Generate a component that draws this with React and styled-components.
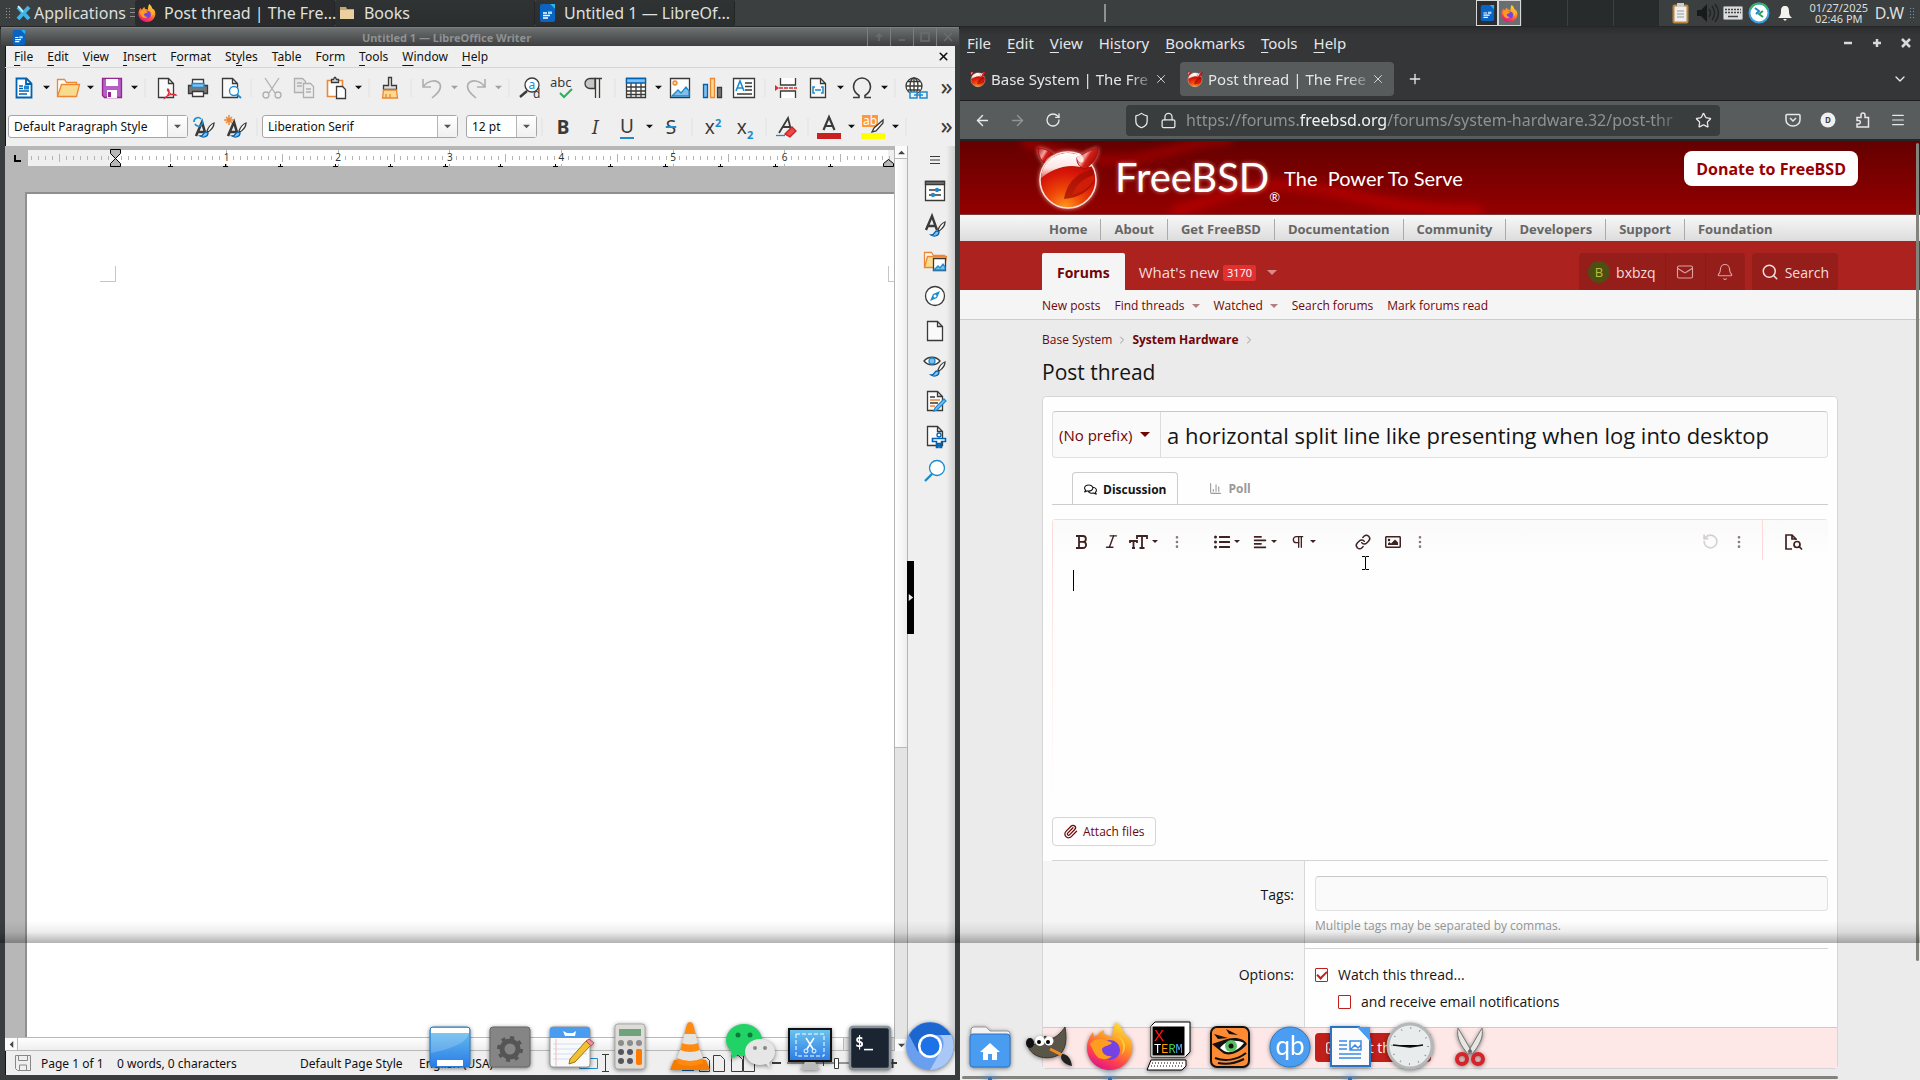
import React from "react";
import styled, { createGlobalStyle, css } from "styled-components";
import {
  ArrowLeft, ArrowRight, RotateCw, Shield, Lock, Star, Menu, ChevronDown, Plus, X, Bell, Search, Italic, Link2,
  Mail, Paperclip, Pilcrow, RotateCcw, ChevronRight, ChartColumn, EllipsisVertical, SquarePen, Link,
} from "lucide-react";
import { FaListUl, FaAlignLeft, FaRegImage, FaRegComments } from "react-icons/fa";

const Global = createGlobalStyle`
  * { box-sizing: border-box; }
  html, body { margin: 0; background: #111; }
  body { font-family: "Noto Sans", "Open Sans", sans-serif; overflow: hidden; }
  button, input, select, textarea { font: inherit; color: inherit; margin: 0; }
  button { border: 0; background: none; padding: 0; cursor: default; white-space: nowrap; }
  a { text-decoration: none; color: inherit; white-space: nowrap; }
  svg { display: block; flex: none; overflow: visible; }
  u { text-underline-offset: 3px; }
`;

const Screen = styled.div`
  position: relative;
  display: flex;
  flex-direction: column;
  height: 100vh;
  overflow: hidden;
  background: #1b1c1d;
`;
const Spacer = styled.div`flex: 1;`;

/* ---------- top panel ---------- */
const Panel = styled.header`
  display: flex;
  align-items: stretch;
  height: 27px;
  flex: none;
  background: #3b3f40;
  border-bottom: 1px solid #242627;
  color: #dcdedd;
  font-size: 16px;
  line-height: 26px;
`;
const Grip = styled.span`
  width: 6px;
  margin: 7px 5px 6px;
  background: radial-gradient(circle, ${(p) => p.$c || "#8b9a9e"} 1px, transparent 1px) 0 0 / 3px 3px;
`;
const AppMenu = styled.button`
  display: flex;
  align-items: center;
  gap: 3px;
  color: #dcdedd;
`;
const Lines = styled.span`
  width: 5px;
  margin: 8px 0 8px 4px;
  background: repeating-linear-gradient(#8a8d8d 0 1px, transparent 1px 4px);
`;
const Task = styled.button`
  position: relative;
  z-index: ${(p) => (p.$on ? 1 : 0)};
  display: flex;
  align-items: center;
  width: 200px;
  padding-left: 3px;
  gap: 8px;
  border-radius: 3px;
  border-right: 1px solid #222425;
  background: ${(p) => (p.$on ? "#292b2c" : "linear-gradient(#303334, #2b2e2f)")};
  color: #dfe0df;
`;
const Bar = styled.span`width: 2px; margin: 4px 0; background: #8f9190;`;
const Pager = styled.div`
  display: flex;
  background: #272b2c;
`;
const Workspace = styled.div`
  display: flex;
  width: 46px;
  border-right: 1px solid #3b3f40;
`;
const Mini = styled.span`
  display: grid;
  place-items: center;
  width: 23px;
  border: 1px solid #d8d8d8;
  background: ${(p) => (p.$on ? "#6b6e6e" : "#2b2d2e")};
`;
const Tray = styled.div`
  display: flex;
  align-items: center;
  padding-left: 8px;
  > svg { width: 26px; }
`;
const Clock = styled.time`
  width: 60px;
  margin: 0 6px 0 11px;
  font-size: 11px;
  line-height: 11px;
  text-align: center;
`;

const Desktop = styled.main`
  flex: 1;
  min-height: 0;
  display: grid;
  grid-template-columns: minmax(0, 1fr) minmax(0, 1fr);
`;

/* ---------- writer window ---------- */
const Writer = styled.section`
  display: flex;
  flex-direction: column;
  min-height: 0;
  border: solid #393d3e;
  border-width: 0 5px 5px;
  border-radius: 4px 4px 0 0;
  box-shadow: inset 1px 0 #111;
  background: #efefef;
  color: #111;
  font-size: 12px;
`;
const TitleBar = styled.div`
  display: flex;
  align-items: center;
  height: 19px;
  margin: 0 -4px;
  padding-left: 10px;
  border-top: 1px solid #7d8080;
  background: linear-gradient(#6d7071, #3c3e3f);
  color: #8f9191;
  h2 { flex: 1; margin: 0; font-size: 11px; font-weight: 700; text-align: center; }
`;
const TitleButton = styled.button`
  display: grid;
  place-items: center;
  width: 23px;
  height: 18px;
  border-left: 1px solid #7b7e7e;
`;
const WriterMenu = styled.nav`
  display: flex;
  align-items: center;
  gap: 14px;
  height: 22px;
  padding: 0 5px 0 9px;
  border-bottom: 1px solid #d5d5d5;
  u { text-underline-offset: 4px; }
`;
const Toolbar = styled.div`
  display: flex;
  align-items: center;
  height: 39px;
  padding-left: 3px;
`;
const Tool = styled.button`
  display: grid;
  place-items: center;
  flex: none;
  width: ${(p) => p.$w || 32}px;
  height: 30px;
  color: #3a3a38;
  opacity: ${(p) => (p.$off ? 0.35 : 1)};
`;
const Sep = styled.span`
  flex: none;
  width: 2px;
  height: 18px;
  margin: 0 4px;
  background: #e8e8e8;
`;
const Combo = styled.label`
  display: flex;
  flex: none;
  width: ${(p) => p.$w}px;
  height: 23px;
  margin-right: ${(p) => p.$gap || 0}px;
  border: 1px solid #a5a5a5;
  border-radius: 3px;
  background: #fff;
  select {
    flex: 1;
    min-width: 0;
    appearance: none;
    border: 0;
    padding: 0 5px;
    background: none;
    color: #111;
    outline: none;
  }
  span {
    display: grid;
    place-items: center;
    width: 20px;
    border-left: 1px solid #b5b5b5;
    background: linear-gradient(#fff, #f0f0f0);
  }
`;
const Glyph = styled.span`
  font-size: 19px;
  line-height: 22px;
  font-weight: ${(p) => (p.$b ? 700 : 400)};
  font-style: ${(p) => (p.$i ? "italic" : "normal")};
  border-bottom: ${(p) => (p.$line ? "2px solid #1e8bcd" : "0")};
  sup, sub { font-size: 11px; line-height: 0; color: #1e8bcd; font-weight: 700; }
  s { text-decoration-color: #1e8bcd; text-decoration-thickness: 2px; }
`;
const More = styled.span`
  font-size: 24px;
  line-height: 24px;
  padding-bottom: 4px;
`;
const Work = styled.div`
  flex: 1;
  min-height: 0;
  display: flex;
`;
const Canvas = styled.div`
  flex: 1;
  min-width: 0;
  display: flex;
  flex-direction: column;
  background: #b7b7b7;
`;
const Ruler = styled.div`
  height: 46px;
  overflow: hidden;
`;
const Sheet = styled.div`
  flex: 1;
  display: flex;
  justify-content: space-between;
  margin-left: 20px;
  padding: 72px 0 0 73px;
  border-top: 2px solid #8f8f8f;
  border-left: 2px solid #909090;
  background: #fff;
`;
const Corner = styled.span`
  width: ${(p) => p.$w}px;
  height: 16px;
  border: solid #c6c6c6;
  border-width: ${(p) => (p.$right ? "0 0 1px 1px" : "0 1px 1px 0")};
`;
const HScroll = styled.div`
  display: flex;
  height: 14px;
  border: solid #b9b9b9;
  border-width: 1px 0;
  background: #e2e2e2;
`;
const VScroll = styled.div`
  display: flex;
  flex-direction: column;
  width: 14px;
  border: solid #b4b4b4;
  border-width: 0 1px;
  background: #e4e4e4;
`;
const ArrowCell = styled.button`
  display: grid;
  place-items: center;
  width: 12px;
  height: 12px;
  background: #fbfbfb;
`;
const Thumb = styled.span`
  flex: ${(p) => p.$f};
  background: ${(p) => (p.$v ? "linear-gradient(90deg, #fff, #eee)" : "linear-gradient(#fff, #eee)")};
  border: 0 solid #b9b9b9;
  border-width: ${(p) => (p.$v ? "1px 0" : "0 1px")};
`;
const Trough = styled.span`flex: ${(p) => p.$f};`;
const Sidebar = styled.aside`
  position: relative;
  display: flex;
  flex-direction: column;
  align-items: center;
  width: 47px;
  padding: 0 0 0 7px;
  background: linear-gradient(90deg, #efefef 38px, #cfcfcf);
`;
const SideButton = styled.button`
  display: grid;
  place-items: center;
  width: 32px;
  height: ${(p) => p.$h || 35}px;
  color: #3a3a38;
`;
const Collapse = styled.button`
  position: absolute;
  left: -1px;
  top: 415px;
  display: grid;
  place-items: center;
  width: 7px;
  height: 73px;
  background: #000;
`;
const Status = styled.footer`
  display: flex;
  align-items: center;
  height: 24px;
  padding-left: 10px;
  white-space: nowrap;
`;
const StatusItem = styled.span`
  width: ${(p) => p.$w}px;
  flex: none;
`;

/* ---------- browser window ---------- */
const Browser = styled.section`
  display: flex;
  flex-direction: column;
  min-height: 0;
  background: #353638;
  color: #e6e6e6;
`;
const BrowserMenu = styled.nav`
  display: flex;
  align-items: center;
  gap: 16px;
  height: 31px;
  padding: 0 8px 0 7px;
  background: linear-gradient(#2b2c2e, #353638 8px);
  font-size: 15px;
`;
const WinButton = styled.button`
  display: grid;
  place-items: center;
  width: 13px;
  height: 20px;
  color: #d9d9d9;
`;
const Tabs = styled.div`
  display: flex;
  align-items: center;
  height: 43px;
  padding: 4px 8px 4px 3px;
  border-bottom: 1px solid #1d1e1f;
  gap: 3px;
`;
const Tab = styled.div`
  display: flex;
  align-items: center;
  width: 214px;
  height: 34px;
  padding: 0 9px 0 7px;
  border-radius: 4px;
  gap: 5px;
  background: ${(p) => (p.$on ? "#575b5c" : "transparent")};
  font-size: 15px;
  button:first-of-type {
    flex: 1;
    min-width: 0;
    text-align: left;
    mask-image: linear-gradient(90deg, #000 88%, rgba(0, 0, 0, 0.3));
  }
`;
const IconButton = styled.button`
  display: grid;
  place-items: center;
  width: ${(p) => p.$w || 35}px;
  height: 28px;
  color: #e8e8e8;
  opacity: ${(p) => (p.$off ? 0.4 : 1)};
`;
const NavBar = styled.div`
  display: flex;
  align-items: center;
  height: 40px;
  padding: 0 5px;
  border-bottom: 2px solid #242627;
  background: #585c5d;
`;
const UrlBar = styled.div`
  flex: 1;
  display: flex;
  align-items: center;
  min-width: 0;
  height: 31px;
  margin: 0 55px 0 56px;
  padding: 0 2px;
  border-radius: 4px;
  background: #3a3d3e;
`;
const Url = styled.a`
  flex: 1;
  min-width: 0;
  margin-left: 4px;
  color: #8f9292;
  font-size: 16px;
  mask-image: linear-gradient(90deg, #000 93%, rgba(0, 0, 0, 0.1));
  b { font-weight: 400; color: #f2f2f2; }
`;
const Viewport = styled.div`
  position: relative;
  flex: 1;
  min-height: 0;
  overflow: hidden;
  background: #ebebeb;
  color: #141414;
  font-family: "Open Sans", "Noto Sans", sans-serif;
`;
const VBar = styled.span`
  position: absolute;
  top: 2px;
  right: 1px;
  width: 3px;
  height: 818px;
  border-radius: 2px;
  background: #82837d;
`;
const HBar = styled.span`
  position: absolute;
  left: 2px;
  right: 82px;
  bottom: 1px;
  height: 3px;
  border-radius: 2px;
  background: #82837d;
`;
const Masthead = styled.div`
  position: relative;
  display: flex;
  height: 73px;
  overflow: hidden;
  background: linear-gradient(#640000, #940000);
  color: #fff;
  font-family: Lato, "Noto Sans", sans-serif;
`;
const Swirl = styled.svg`
  position: absolute;
  left: 62px;
  top: 0;
`;
const Brand = styled.a`
  position: relative;
  display: flex;
  margin-left: 76px;
  svg { margin-top: 4px; filter: drop-shadow(0 0 2px rgba(255, 190, 180, 0.8)); }
`;
const BrandName = styled.span`
  margin-left: 15px;
  font-size: 40px;
  line-height: 72px;
  text-shadow: 0 0 4px rgba(255, 170, 160, 0.7);
`;
const Registered = styled.span`
  align-self: flex-end;
  font-size: 13px;
  line-height: 34px;
`;
const Motto = styled.span`
  margin-left: 4px;
  font-size: 20px;
  line-height: 74px;
  white-space: pre;
`;
const Donate = styled.a`
  position: relative;
  height: 35px;
  margin: 10px 62px 0 auto;
  padding: 0 12px;
  border-radius: 8px;
  background: #fff;
  color: #900;
  font: 700 16px/36px "Open Sans", sans-serif;
`;
const SiteNav = styled.nav`
  display: flex;
  align-items: center;
  height: 27px;
  padding: 2px 0 0 76px;
  border-top: 1px solid #7d3b3b;
  background: linear-gradient(#f8f8f8, #dcdcdc);
  color: #666;
  font-size: 13px;
  font-weight: 700;
  a {
    padding: 0 13px;
    line-height: 21px;
    & + a { border-left: 1px solid #aaa; }
  }
`;
const Center = styled.div`
  display: flex;
  margin: 0 82px;
`;
const RedBar = styled.div`
  background: #ac221e;
  padding-top: 12px;
  color: #f6dcdb;
  font-size: 15px;
  line-height: 37px;
`;
const CurrentTab = styled.a`
  padding: 0 15px;
  height: 37px;
  border-radius: 2px 2px 0 0;
  background: #f5f5f5;
  color: #700506;
  font-size: 14px;
  font-weight: 700;
  line-height: 39px;
`;
const NewLink = styled.a`
  display: flex;
  align-items: center;
  padding-top: 2px;
  height: 37px;
  margin-left: 14px;
  gap: 4px;
`;
const Badge = styled.span`
  padding: 0 4px;
  border-radius: 2px;
  background: #e03030;
  color: #fff;
  font-size: 11px;
  line-height: 16px;
`;
const Caret = styled.span`
  width: 0;
  height: 0;
  margin-left: ${(p) => p.$ml || 0}px;
  border: ${(p) => p.$s || 5}px solid transparent;
  border-top-color: ${(p) => p.$c || "currentColor"};
  border-bottom: 0;
`;
const UserGroup = styled.div`
  display: flex;
  margin-left: ${(p) => (p.$first ? "auto" : "7px")};
  border-radius: 4px 4px 0 0;
  background: #951e1b;
  font-size: 14px;
  a, button {
    display: flex;
    align-items: center;
    justify-content: center;
    min-width: 40px;
    height: 37px;
    padding: 1px 9px 0;
    gap: 6px;
    & + a, & + button { border-left: 1px solid #8a1a17; }
  }
`;
const Avatar = styled.span`
  width: 22px;
  height: 22px;
  border-radius: 50%;
  background: #4d4d14;
  color: #b8c034;
  font-size: 13px;
  line-height: 22px;
  text-align: center;
`;
const SubNav = styled.nav`
  padding-top: 2px;
  border-bottom: 1px solid #ccc;
  background: #f5f5f5;
  color: #700506;
  font-size: 12px;
  line-height: 27px;
  a { display: flex; align-items: center; margin-right: 14px; }
`;
const Crumbs = styled.nav`
  display: flex;
  align-items: center;
  margin: 10px 82px 0;
  gap: 4px;
  color: #700506;
  font-size: 12px;
  line-height: 20px;
  svg { color: #999; }
`;
const Heading = styled.h1`
  margin: 8px 82px 10px;
  font-size: 21px;
  font-weight: 400;
  line-height: 28px;
`;
const Block = styled.form`
  margin: 0 82px;
  border: 1px solid #d6d6d6;
  border-radius: 4px;
  background: #fefefe;
`;
const BlockBody = styled.div`
  margin: 14px 9px 0;
  border-bottom: 1px solid #d4d4d4;
`;
const TitleGroup = styled.div`
  display: flex;
  height: 47px;
  border: 1px solid #e0e0e0;
  border-top-color: #c8c8c8;
  border-radius: 4px;
  background: #fafafa;
`;
const Prefix = styled.label`
  display: flex;
  align-items: center;
  width: 108px;
  padding-left: 6px;
  border-right: 1px solid #ddd;
  color: #700506;
  font-size: 15px;
  select { width: 80px; appearance: none; border: 0; padding: 0; background: none; outline: none; }
`;
const TitleInput = styled.input`
  flex: 1;
  min-width: 0;
  padding: 0 6px;
  border: 0;
  outline: none;
  background: none;
  font-size: 22px;
`;
const TypeTabs = styled.div`
  display: flex;
  height: 33px;
  margin-top: 14px;
  padding-left: 20px;
  border-bottom: 1px solid #ccc;
  font-size: 12px;
`;
const TypeTab = styled.button`
  display: flex;
  align-items: center;
  height: 32px;
  gap: 6px;
  padding: 1px ${(p) => (p.$on ? 11 : 31)}px 0;
  border: solid #ccc;
  border-width: ${(p) => (p.$on ? "1px 1px 0" : "0")};
  border-radius: 4px 4px 0 0;
  color: ${(p) => (p.$on ? "#141414" : "#999")};
  font-weight: 700;
`;
const Editor = styled.div`
  position: relative;
  margin-top: 14px;
  border-top: 1px solid #fddad8;
  border-radius: 4px;
  background: linear-gradient(#fddad8, #fefefe) 0 0 / 1px 100% no-repeat;
`;
const EditorBar = styled.div`
  display: flex;
  align-items: center;
  height: 40px;
  margin-left: 1px;
  padding-left: 13px;
  background: linear-gradient(#fafafa, #fefefe);
`;
const EditButton = styled.button`
  display: flex;
  align-items: center;
  justify-content: center;
  gap: 4px;
  width: ${(p) => p.$w}px;
  height: 40px;
  margin-left: ${(p) => p.$ml || 0}px;
  padding-top: 3px;
  color: #3f2222;
  opacity: ${(p) => (p.$off ? 0.2 : p.$dim ? 0.6 : 1)};
  ${(p) => p.$line && css`border-left: 1px solid #fddad8; margin-left: 5px; padding-right: 4px;`}
`;
const TextArea = styled.textarea`
  display: block;
  width: calc(100% - 1px);
  height: 242px;
  margin-left: 1px;
  padding: 12px 20px;
  border: 0;
  outline: none;
  resize: none;
  background: none;
`;
const TextCaret = styled.span`
  position: absolute;
  left: 21px;
  top: 50px;
  width: 1px;
  height: 21px;
  background: #000;
`;
const Attach = styled.button`
  display: flex;
  align-items: center;
  height: 29px;
  margin: 15px 0 14px;
  padding: 0 10px;
  gap: 5px;
  border: 1px solid #d6d6d6;
  border-radius: 4px;
  color: #700506;
  font-size: 12px;
`;
const FormRow = styled.div`
  display: grid;
  grid-template-columns: 33% minmax(0, 1fr);
  font-size: 14px;
  line-height: 20px;
`;
const RowLabel = styled.label`
  padding: ${(p) => p.$top || 24}px 10px 0 0;
  border-right: 1px solid #d8d8d8;
  background: #f5f5f5;
  text-align: right;
`;
const RowField = styled.div`
  margin-right: 9px;
  padding: ${(p) => p.$p};
  border-bottom: ${(p) => (p.$line ? "1px solid #d4d4d4" : "0")};
`;
const TagInput = styled.input`
  display: block;
  width: 100%;
  height: 35px;
  border: 1px solid #e0e0e0;
  border-top-color: #c8c8c8;
  border-radius: 4px;
  background: #fafafa;
`;
const Hint = styled.p`
  margin: 5px 0 12px;
  color: #999;
  font-size: 12px;
  line-height: 20px;
`;
const Check = styled.label`
  display: flex;
  align-items: center;
  height: 27px;
  margin-left: ${(p) => (p.$in ? 23 : 0)}px;
  gap: 10px;
  font-size: 14px;
  input {
    display: grid;
    place-items: center;
    appearance: none;
    width: 13px;
    height: 14px;
    margin: 0;
    border: 1px solid #c0201c;
    border-radius: 1px;
  }
  input:checked::after {
    content: "";
    width: 4px;
    height: 8px;
    border: solid #c0201c;
    border-width: 0 2px 2px 0;
    transform: translateY(-1px) rotate(45deg);
  }
`;
const SubmitRow = styled.div`
  padding: 5px 0 6px 33%;
  border-top: 1px solid #ccc;
  background: #fee8e7;
`;
const Submit = styled.button`
  display: flex;
  align-items: center;
  justify-content: center;
  gap: 6px;
  width: 116px;
  height: 29px;
  margin-left: 10px;
  border-radius: 4px;
  background: #c01f1a;
  color: #fff;
  font-size: 14px;
`;

/* ---------- dock and overlays ---------- */
const Shade = styled.div`
  position: absolute;
  left: 0;
  right: 0;
  bottom: 137px;
  height: 22px;
  background: linear-gradient(transparent, rgba(0, 0, 0, 0.07) 50%, rgba(0, 0, 0, 0.3));
  pointer-events: none;
`;
const Dock = styled.nav`
  position: absolute;
  left: 0;
  right: 0;
  bottom: 0;
  display: flex;
  justify-content: center;
`;
const DockItem = styled.button`
  position: relative;
  display: grid;
  justify-items: center;
  width: 60px;
  height: 58px;
  svg { filter: drop-shadow(0 1px 2px rgba(0, 0, 0, 0.5)); }
`;
const RunDot = styled.span`
  position: absolute;
  bottom: 0;
  width: 4px;
  height: 3px;
  border-radius: 2px 2px 0 0;
  background: #2c70b8;
  box-shadow: 0 0 6px 4px rgba(70, 140, 220, 0.4);
`;
const Pointer = styled.svg`
  position: absolute;
  left: 1361px;
  top: 556px;
`;

/* ---------- drawings ---------- */
const Tri = ({ c = "#111", w = 7, d = "down" }) => (
  <svg width={w} height={w} viewBox="0 0 8 8">
    <path fill={c} d={d === "down" ? "M0 2h8L4 6z" : d === "up" ? "M0 6h8L4 2z" : d === "left" ? "M6 0v8L2 4z" : "M2 0v8l5-4z"} />
  </svg>
);
const Dots3 = () => <EllipsisVertical size={16} strokeWidth={2} />;

const Fox = ({ s = 18 }) => (
  <svg width={s} height={s} viewBox="0 0 48 48">
    <defs>
      <linearGradient id="fxa" x1=".8" y1="0" x2=".3" y2="1">
        <stop offset="0" stopColor="#ffe63c" /><stop offset=".4" stopColor="#ff9a24" />
        <stop offset=".75" stopColor="#ff3f50" /><stop offset="1" stopColor="#e0128a" />
      </linearGradient>
    </defs>
    <path fill="url(#fxa)" d="M30 0c5 4 7 8 8 12 3 1 6 4 7 7 2 5 2 12-2 18-4 7-11 11-19 11C11 48 1 38 1 26c0-7 3-12 6-16l1 5c1-1 3-2 4-2 1-2 3-4 6-5-1 2 0 4 1 5 3 0 5 1 7 3 1-6 1-11 4-16z" />
    <circle cx="24" cy="28" r="10" fill="#7542e5" />
    <path fill="#ff9d1e" d="M4 22c4-5 9-6 14-4 3 1 6 1 8 3-3 3-9 3-10 6 0 5 5 8 10 7-5 5-14 4-17-2-2-3-3-7-5-10z" />
    <path fill="#ffcb36" d="M32 14c5 5 7 12 3 19 6-5 6-14-3-19z" />
  </svg>
);
const Daemon = ({ s = 16 }) => (
  <svg width={s} height={s} viewBox="0 0 64 64">
    <defs>
      <radialGradient id="dma" cx=".45" cy="1" r=".9">
        <stop offset="0" stopColor="#ff9a1c" /><stop offset=".35" stopColor="#ef4a08" />
        <stop offset=".7" stopColor="#d81608" /><stop offset="1" stopColor="#b00c04" />
      </radialGradient>
      <linearGradient id="dmc" x1="0" y1="0" x2="0" y2="1">
        <stop offset="0" stopColor="#fff" /><stop offset=".6" stopColor="#fbe6e3" /><stop offset="1" stopColor="#e2655a" />
      </linearGradient>
      <linearGradient id="dmb" x1="0" y1="0" x2="1" y2=".6">
        <stop offset="0" stopColor="#a80c0c" /><stop offset=".45" stopColor="#f6a39c" /><stop offset=".6" stopColor="#d42018" /><stop offset="1" stopColor="#9a0806" />
      </linearGradient>
    </defs>
    <circle cx="32" cy="35" r="28" fill="url(#dma)" stroke="#ffe1da" strokeWidth="1.500" />
    <path fill="#a20c04" d="M57 24c-15 4-26 12-29 30 14-1 26-8 30-18 0-4 0-8-1-12z" opacity=".75" />
    <path fill="#d62208" d="M58 30c-10 3-18 9-22 20 10-2 18-8 22-15z" opacity=".8" />
    <path fill="url(#dmc)" d="M5 33C6 18 18 8 32 8c11 0 20 5 24 13-8 3-12 0-20 0-13 0-23 6-31 12z" />
    <path fill="url(#dmb)" stroke="#a00" strokeWidth=".8" d="M2 3c7 1 12 3 15 6-4 2-8 5-9 9C5 15 2 10 2 3z" />
    <path fill="url(#dmb)" stroke="#a00" strokeWidth=".8" d="M62 3c0 8-4 15-13 21-5-1-9-6-8-12C48 9 55 4 62 3z" />
    <ellipse cx="44" cy="13" rx="3" ry="5" fill="#fff" opacity=".8" transform="rotate(-30 44 13)" />
  </svg>
);
const WriterLogo = ({ s = 18 }) => (
  <svg width={s} height={s} viewBox="0 0 18 18">
    <path fill="#0a64c4" d="M4 0h8l5 5v11a2 2 0 0 1-2 2H4a2 2 0 0 1-2-2V2a2 2 0 0 1 2-2z" />
    <path fill="#25b4f0" d="M12 0h5v5z" />
    <path stroke="#fff" strokeWidth="1.4" d="M5 9h4M5 11.500h7M5 14h5" /><path fill="#9fe0ff" d="M10 7.500h4v2.500h-4z" />
  </svg>
);
const XfceLogo = () => (
  <svg width="15" height="16" viewBox="0 0 15 16">
    <path fill="none" stroke="#3fb4e8" strokeWidth="4" d="M2 2l11 12M13 2L2 14" /><path stroke="#d5f2ff" strokeWidth="1.500" d="M2 1l5 6" />
  </svg>
);
const Folder = () => (
  <svg width="18" height="16" viewBox="0 0 18 16"><path fill="#c9a473" d="M2 2h6l1 2h7v10H2z" /><path fill="#eccf9f" d="M2 5h14v9H2z" /></svg>
);

const K = "#3a3a38", B = "#1e8bcd", O = "#ed8733";
const Ic = ({ children, s = 24 }) => (
  <svg width={s} height={s} viewBox="0 0 24 24" fill="none" stroke={K} strokeWidth="1.3">{children}</svg>
);
const doc = "M4.500 2.500h10l5 5v14h-15zM14.500 2.500v5h5";
const Brush = () => (
  <>
    <path fill="#fff" d="M22 8c-3 1-6 5-7 8l1 1c3-2 6-5 6-9z" />
    <path stroke="#0063b1" fill="#83beec" d="M14 17c-3 0-2 4-6 4 3 2 8 1 8-3z" />
  </>
);
const ICONS = {
  newdoc: <Ic><path stroke="#0063b1" fill="#fff" strokeWidth="1.800" d="M4.500 2.500h10l5 5v14h-15zM14 3v5h5" /><path stroke="#0063b1" d="M7 10h4M7 12.500h4M7 15h10M7 18h8" /><path fill="#1e8bcd" stroke="none" d="M12 9.500h5v4h-5z" /></Ic>,
  open: <Ic><path stroke={O} fill="#fff" d="M1.500 20V3.500h7l2 3h10V10" /><path stroke={O} fill="#f8db8f" d="M1.500 20.500l4-12h18l-3 12z" /></Ic>,
  save: <Ic><path stroke="#92268f" fill="#b65fc4" d="M2.500 2.500h19v19h-17l-2-2z" /><path fill="#fff" stroke="none" d="M6 3h12v7H6zM7 14h10v8H7z" /><path fill="#92268f" stroke="none" d="M8 16h3v5H8z" /></Ic>,
  pdf: <Ic><path fill="#fafafa" d={doc} /><path stroke="#e02b3b" d="M11 22c4-2 5-8 3-9-2 0 2 7 8 6-3-2-9 0-11 3z" /></Ic>,
  print: <Ic><path fill="#fff" d="M6.500 3.500h11v5h-11z" /><path fill="#797774" d="M2.500 9.500h19v8h-19z" /><path fill="#83beec" stroke={B} d="M6 7.500h12v4H6z" /><path fill="#fff" d="M6.500 15.500h11v5h-11z" /></Ic>,
  preview: <Ic><path fill="#fafafa" d={doc} /><circle cx="16" cy="15" r="4.500" stroke={B} fill="#fff" /><path stroke={B} strokeWidth="2" d="M19 18.500l4 3.500" /></Ic>,
  cut: <Ic><path d="M5 2l10 15M19 2L9 17" /><circle cx="6" cy="19" r="3" /><circle cx="18" cy="19" r="3" /></Ic>,
  copy: <Ic><path fill="#ddd" d="M2.500 2.500h8l3 3v11h-11zM5 7h5M5 10h5" /><path fill="#eee" d="M11.500 7.500h7l3 3v11h-10zM14 13h5M14 16h5" /></Ic>,
  paste: <Ic><path stroke={O} fill="#fff" strokeWidth="1.600" d="M3.500 4.500h15v16h-15z" /><path fill="#ddd" d="M7.500 6.500v-3h2l1-2h1l1 2h2v3z" /><path fill="#fff" d="M12.500 10.500h6l3 3v9h-9z" /></Ic>,
  clone: <Ic><path fill="#ddd" d="M10.500 1.500h3v8h5v4h-13v-4h5z" /><path stroke={O} fill="#f8db8f" d="M5.500 14h13l1 8h-15zM8 18v4M12 18v4" /></Ic>,
  undo: <Ic><path strokeWidth="1.600" d="M3 3v8h8M3 11c5-7 14-8 17-3 2 5-2 9-8 14" /></Ic>,
  redo: <Ic><path strokeWidth="1.600" d="M21 3v8h-8M21 11c-5-7-14-8-17-3-2 5 2 9 8 14" /></Ic>,
  find: <Ic><circle cx="14" cy="9" r="7" fill="#fff" /><path strokeWidth="2.400" d="M9 15l-7 6" /><text x="10.500" y="13" fontSize="12" fill={B} stroke="none">a</text><text x="15" y="22" fontSize="12" fill={K} stroke="none">d</text></Ic>,
  spell: <Ic><text x="0" y="11" fontSize="13" fill={K} stroke="none">abc</text><path stroke="#28b05c" strokeWidth="2" d="M10 17l4 4 8-8" /></Ic>,
  pilcrow: <Ic><path fill="#c8c6c4" d="M13 2.500H8a5 5 0 0 0 0 10h5z" /><path d="M13.500 22V2.500H20M17.500 22V2.500" /></Ic>,
  table: <Ic><path fill="#fff" d="M2.500 2.500h19v19h-19zM2 11h20M2 15h20M2 18.500h20M7 7v14M12 7v14M17 7v14" /><path fill="#83beec" stroke="#0063b1" d="M2.500 2.500h19V7h-19z" /></Ic>,
  image: <Ic><path fill="#fff" d="M2.500 2.500h19v19h-19z" /><circle cx="7" cy="7" r="2" stroke={O} fill="#f8db8f" /><path fill="#83beec" stroke={B} d="M4 20l6-6 3 3 5-6 3 4v5z" /></Ic>,
  chart: <Ic><path fill="#83beec" stroke="#0063b1" d="M3.500 8.500h4v13h-4z" /><path fill="#f8db8f" stroke={O} d="M10.500 2.500h4v19h-4z" /><path fill="#797774" d="M17.500 11.500h4v10h-4z" /></Ic>,
  textbox: <Ic><path fill="#fff" d="M1.500 2.500h21v19h-21zM13 7h7M13 10.500h7M13 14h7M5 18h15" /><path stroke={B} strokeWidth="1.600" d="M4 15L8 5l4 10M5 12h6" /></Ic>,
  pagebreak: <Ic><path fill="#fff" d="M6.500 2v7h15V2M6.500 22v-7h15v7" /><path stroke="#e02b2b" strokeWidth="1.600" strokeDasharray="4 1" d="M5 12h18" /><path fill="#e02b2b" stroke="none" d="M1 9l4 3-4 3z" /></Ic>,
  field: <Ic><path fill="#fafafa" d={doc} /><path stroke={B} strokeWidth="1.500" d="M9 11H7v6h2M15 11h2v6h-2M9 14h6" /></Ic>,
  omega: <Ic><path strokeWidth="1.600" d="M3 21.500h6v-2C5 17 3.500 14 3.500 10.500a8.500 8.500 0 0 1 17 0C20.500 14 19 17 15 19.500v2h6" /></Ic>,
  link: <Ic><circle cx="10" cy="10" r="8" fill="#fff" /><path d="M2 10h16M10 2v16M4 5.500h12M4 14h12" /><ellipse cx="10" cy="10" rx="4" ry="8" /><path fill="#efefef" stroke={B} strokeWidth="1.500" d="M6 16h7v6H6zM16 16h7v6h-7zM10 19h9" /></Ic>,
  update: <Ic><path strokeWidth="2.600" d="M4 21l6-14 4 14M6 17h6" /><Brush /><path stroke={B} strokeWidth="1.600" d="M2 7a4 4 0 0 1 7-3M10 5a4 4 0 0 1-7 4" /></Ic>,
  newstyle: <Ic><path strokeWidth="2.600" d="M4 21l6-14 4 14M6 17h6" /><Brush /><path stroke={O} strokeWidth="1.500" d="M5 0v10M0 5h10M2 2l6 6M8 2L2 8" /></Ic>,
  clear: <Ic><path strokeWidth="1.800" d="M4 18L13 3l3 12M8 12h7" /><path stroke={B} d="M1 20.500h9" /><path fill="#e8474c" stroke="#c9211e" d="M10 19l7-7 4 4-6 6z" /></Ic>,
  color: <Ic><path strokeWidth="2.200" d="M6.500 15L12 2l5.500 13M8 11h8" /><path fill="#c9211e" stroke="none" d="M0 18h24v6H0z" /></Ic>,
  hilite: <Ic><path fill="#ff9838" stroke="none" d="M1 0h16v12H1z" /><path fill="#ff0" stroke="none" d="M0 18h24v6H0z" /><text x="2" y="10" fontSize="12" fill="#fff" stroke="none">ab</text><path fill="#fff" d="M22 5L13 13l-2 4 4-1 7-8z" /></Ic>,
  props: <Ic><path fill="#fff" d="M2.500 2.500h19v19h-19z" /><path fill="#797774" d="M2.500 2.500h19v3h-19z" /><path d="M6 11h12M6 16h12" /><circle cx="14" cy="11" r="1.500" fill={B} stroke={B} /><circle cx="10" cy="16" r="1.500" fill={B} stroke={B} /></Ic>,
  styles: <Ic><path strokeWidth="2.400" d="M3 16L9 2l5 14M5 12h8" /><Brush /></Ic>,
  gallery: <Ic><path stroke={O} fill="#fff" d="M1.500 18V3.500h7l2 3h11V10" /><path stroke={O} fill="#f8db8f" d="M1.500 18.500l3-11h19l-2 11z" /><path fill="#fff" d="M10.500 9.500h12v12h-12z" /><path fill="#83beec" stroke={B} d="M11 21l4-4 2 2 3-4 2 3v3z" /></Ic>,
  navigator: <Ic><circle cx="12" cy="12" r="9.500" fill="#fff" /><path fill={B} stroke="none" d="M17 7l-3 7-7 3 3-7z" /><circle cx="12" cy="12" r="1.500" fill="#fff" stroke="none" /></Ic>,
  page: <Ic><path fill="#fafafa" d={doc} /></Ic>,
  inspector: <Ic><path fill="#fff" d="M1 7c4-5 12-5 16 0-4 5-12 5-16 0z" /><circle cx="9" cy="7" r="3" fill="#83beec" stroke={B} /><Brush /></Ic>,
  changes: <Ic><path fill="#fafafa" d={doc} /><path stroke={O} d="M7 11h10M7 17h5" /><path d="M7 8h5M7 14h8" /><path fill="#83beec" stroke={B} d="M21 10l2 2-9 9-3 1 1-3z" /></Ic>,
  access: <Ic><path fill="#fafafa" d={doc} /><circle cx="16" cy="11" r="2" fill="#fff" stroke="#0063b1" /><path fill="#fff" stroke="#0063b1" strokeWidth="1.600" d="M9.500 14.500h13v3h-4v6h-1.500v-4h-2v4h-1.500v-6h-4z" /></Ic>,
  search: <Ic><circle cx="14" cy="9" r="7.500" fill="#fff" stroke={B} /><path stroke={B} strokeWidth="2.400" d="M9 15l-7 7" /></Ic>,
};

const WRITER_MENU = [["", "F", "ile"], ["", "E", "dit"], ["", "V", "iew"], ["", "I", "nsert"], ["F", "o", "rmat"], ["St", "y", "les"], ["T", "a", "ble"], ["Fo", "r", "m"], ["", "T", "ools"], ["", "W", "indow"], ["", "H", "elp"]];
const FOX_MENU = [["", "F", "ile"], ["", "E", "dit"], ["", "V", "iew"], ["Hi", "s", "tory"], ["", "B", "ookmarks"], ["", "T", "ools"], ["", "H", "elp"]];
const STANDARD = ["newdoc>", "open>", "save>", "|", "pdf", "print", "preview", "|", "-cut", "-copy", "paste>", "|", "clone", "|", "-undo>", "-redo>", "|", "find", "spell", "pilcrow", "|", "table>", "image", "chart", "textbox", "|", "pagebreak", "field>", "omega>", "|", "link"];
const SIDE = ["props", "styles", "gallery", "navigator", "page", "inspector", "changes", "access", "search"];

const Mnemonic = ({ parts }) => <button>{parts[0]}<u>{parts[1]}</u>{parts[2]}</button>;
const ArrowTool = ({ off }) => <Tool $w={12} $off={off} aria-label="More"><Tri /></Tool>;

function RulerDrawing() {
  const zero = 110, inch = 111.6;
  const ticks = [];
  for (let i = -12; i < 112; i++) {
    const x = zero + (i * inch) / 16;
    if (i === 0 || x > 888) continue;
    const whole = i % 16 === 0, half = i % 8 === 0;
    ticks.push(<path key={i} stroke="#b4b4b4" d={whole ? `M${x} 4v3M${x} 18v2` : half ? `M${x} 8v8` : `M${x} 10v4`} />);
  }
  return (
    <svg width="890" height="46" viewBox="0 0 890 46">
      <path fill="#efefef" d="M23 4h867v16H23z" /><path fill="#fff" d="M110 4h773v16H110z" />
      <path stroke="#000" strokeWidth="2" fill="none" d="M10 9v6h6" />
      <g shapeRendering="crispEdges">{ticks}</g>
      {[1, 2, 3, 4, 5, 6].map((n) => <text key={n} x={zero + n * inch} y="15" fontSize="10" textAnchor="middle" fill="#333">{n}</text>)}
      {Array.from({ length: 13 }, (_, i) => <path key={i} stroke="#000" d={`M${163 + i * 55} 20.500h5M${165.5 + i * 55} 18v3`} />)}
      <path fill="#b7b7b7" stroke="#000" d="M105.500 3.500h10v4l-10 10v3h10v-3l-10-10z" />
      <path fill="#b7b7b7" stroke="#000" d="M878.500 20.500v-3l5-4 5 4v3z" />
    </svg>
  );
}

function WriterWindow() {
  return (
    <Writer aria-label="Writer">
      <TitleBar>
        <WriterLogo s={15} />
        <h2>Untitled 1 — LibreOffice Writer</h2>
        {["M5 9V2M2 5l3-3 3 3", "M2 8h6", "M1 1h8v8H1z", "M1 1l8 8M9 1L1 9"].map((d) => (
          <TitleButton key={d} aria-label="Window control"><svg width="10" height="10" fill="none" stroke="#6a6d6e" strokeWidth="1.500"><path d={d} /></svg></TitleButton>
        ))}
      </TitleBar>
      <WriterMenu>
        {WRITER_MENU.map((m) => <Mnemonic key={m.join("")} parts={m} />)}
        <Spacer />
        <button aria-label="Close document"><X size={13} strokeWidth={3} /></button>
      </WriterMenu>
      <Toolbar>
        {STANDARD.map((t, i) => {
          if (t === "|") return <Sep key={i} />;
          const name = t.replace(/[->]/g, ""), off = t[0] === "-";
          return (
            <React.Fragment key={i}>
              <Tool $off={off} aria-label={name}>{ICONS[name]}</Tool>
              {t.endsWith(">") && <ArrowTool off={off} />}
            </React.Fragment>
          );
        })}
        <Spacer /><Tool $w={17}><More>»</More></Tool>
      </Toolbar>
      <Toolbar>
        <Combo $w={180}><select aria-label="Paragraph style"><option>Default Paragraph Style</option></select><span><Tri c="#555" /></span></Combo>
        <Tool>{ICONS.update}</Tool><Tool>{ICONS.newstyle}</Tool><Sep />
        <Combo $w={196} $gap={8}><select aria-label="Font name"><option>Liberation Serif</option></select><span><Tri c="#555" /></span></Combo>
        <Combo $w={71}><select aria-label="Font size"><option>12 pt</option></select><span><Tri c="#555" /></span></Combo>
        <Sep />
        <Tool><Glyph $b>B</Glyph></Tool>
        <Tool><Glyph $i>I</Glyph></Tool>
        <Tool><Glyph $line>U</Glyph></Tool><ArrowTool />
        <Tool><Glyph><s>S</s></Glyph></Tool><Sep />
        <Tool><Glyph>x<sup>2</sup></Glyph></Tool>
        <Tool><Glyph>x<sub>2</sub></Glyph></Tool><Sep />
        <Tool>{ICONS.clear}</Tool><Sep />
        <Tool>{ICONS.color}</Tool><ArrowTool />
        <Tool>{ICONS.hilite}</Tool><ArrowTool /><Sep />
        <Spacer /><Tool $w={17}><More>»</More></Tool>
      </Toolbar>
      <Work>
        <Canvas>
          <Ruler><RulerDrawing /></Ruler>
          <Sheet><Corner $w={16} /><Corner $right $w={6} /></Sheet>
          <HScroll>
            <ArrowCell aria-label="Scroll left"><Tri d="left" c="#444" /></ArrowCell><Thumb $f={820} /><Trough $f={50} />
          </HScroll>
        </Canvas>
        <VScroll>
          <ArrowCell aria-label="Scroll up"><Tri d="up" c="#444" /></ArrowCell><Thumb $v $f={579} /><Trough $f={287} />
          <ArrowCell aria-label="Scroll down"><Tri c="#444" /></ArrowCell>
        </VScroll>
        <Sidebar>
          <SideButton $h={27} aria-label="Sidebar settings"><svg width="10" height="8" stroke={K}><path d="M0 .5h10M0 4h10M0 7.500h10" /></svg></SideButton>
          {SIDE.map((n) => <SideButton key={n} aria-label={n}>{ICONS[n]}</SideButton>)}
          <Collapse aria-label="Hide sidebar"><Tri d="right" c="#eee" /></Collapse>
        </Sidebar>
      </Work>
      <Status>
        <StatusItem $w={26}><svg width="16" height="16" fill="none" stroke="#888"><path d="M.5 .5h15v15h-13l-2-2zM3.500 .5v5h9v-5M4.500 15v-5h7v5" /></svg></StatusItem>
        <StatusItem $w={76}>Page 1 of 1</StatusItem>
        <StatusItem $w={183}>0 words, 0 characters</StatusItem>
        <StatusItem $w={119}>Default Page Style</StatusItem>
        <StatusItem $w={156}>English (USA)</StatusItem>
        <svg width="320" height="24" fill="none" stroke="#3a3a38">
          <path stroke="#1e8bcd" d="M4.500 7.500h18v10h-18z" /><path d="M30.500 4v16M27 3.500h7M27 20.500h7" />
          <path fill="#0063b1" stroke="none" d="M107 14h12v6h-12z" />
          <path d="M124.500 6.500h7l3 3v11h-10zM138.500 4.500h7l4 4v12h-11zM156.500 4.500h7l4 4v12h-11zM168.500 4.500h7l4 4v12h-11z" />
          <path strokeWidth="2" d="M197 12h9M313 12h9M317.500 8v9" /><path d="M212 12h98M248.500 9v6" /><path fill="#fff" d="M259.500 7.500h4v10h-4z" />
        </svg>
      </Status>
    </Writer>
  );
}

function ForumPage() {
  return (
    <Viewport>
      <Masthead>
        <Swirl width="520" height="73" viewBox="0 0 520 73">
          <defs><filter id="soft"><feGaussianBlur stdDeviation="5" /></filter></defs>
          <g filter="url(#soft)" fill="none" stroke="#d00000" strokeWidth="7" opacity=".6">
            <path d="M0 0c40 14 80 22 110 18 40-6 60-18 100-20" /><path d="M150 72c40-14 90-34 130-26 60 6 90 24 180 24" strokeWidth="10" />
          </g>
        </Swirl>
        <Brand href="#home">
          <Daemon s={64} /><BrandName>FreeBSD</BrandName><Registered>®</Registered><Motto>{"The  Power To Serve"}</Motto>
        </Brand>
        <Donate href="#donate">Donate to FreeBSD</Donate>
      </Masthead>
      <SiteNav>
        {["Home", "About", "Get FreeBSD", "Documentation", "Community", "Developers", "Support", "Foundation"].map((t) => <a key={t} href="#site">{t}</a>)}
      </SiteNav>
      <RedBar>
        <Center>
          <CurrentTab href="#forums">Forums</CurrentTab>
          <NewLink href="#new">What's new <Badge>3170</Badge><Caret $ml={7} $c="#dc8a88" /></NewLink>
          <UserGroup $first>
            <a href="#account"><Avatar>B</Avatar>bxbzq</a>
            <button aria-label="Conversations"><Mail size={18} strokeWidth={1.5} opacity=".7" /></button>
            <button aria-label="Alerts"><Bell size={18} strokeWidth={1.5} opacity=".7" /></button>
          </UserGroup>
          <UserGroup><button><Search size={18} />Search</button></UserGroup>
        </Center>
      </RedBar>
      <SubNav>
        <Center>
          <a href="#p">New posts</a><a href="#f">Find threads<Caret $s={4} $ml={7} $c="#b57e7e" /></a><a href="#w">Watched<Caret $s={4} $ml={7} $c="#b57e7e" /></a>
          <a href="#s">Search forums</a><a href="#m">Mark forums read</a>
        </Center>
      </SubNav>
      <Crumbs>
        <a href="#base">Base System</a><ChevronRight size={12} /><a href="#hw"><b>System Hardware</b></a><ChevronRight size={12} />
      </Crumbs>
      <Heading>Post thread</Heading>
      <Block onSubmit={(e) => e.preventDefault()}>
        <BlockBody>
          <TitleGroup>
            <Prefix><select aria-label="Prefix"><option>(No prefix)</option></select><Caret $ml={1} /></Prefix>
            <TitleInput aria-label="Thread title" defaultValue="a horizontal split line like presenting when log into desktop" />
          </TitleGroup>
          <TypeTabs>
            <TypeTab type="button" $on><FaRegComments size={13} />Discussion</TypeTab>
            <TypeTab type="button"><ChartColumn size={13} />Poll</TypeTab>
          </TypeTabs>
          <Editor>
            <EditorBar>
              <EditButton type="button" $w={30} aria-label="Bold">
                <svg width="13" height="14" fill="none" stroke="currentColor" strokeWidth="1.800"><path d="M1 1h7a2.800 2.800 0 0 1 0 5.800H4M8 6.800a3 3 0 0 1 0 6.200H1M4 1v12" /></svg>
              </EditButton>
              <EditButton type="button" $w={30} aria-label="Italic"><Italic size={17} /></EditButton>
              <EditButton type="button" $w={34} aria-label="Font size">
                <svg width="19" height="14" fill="none" stroke="currentColor" strokeWidth="1.800"><path d="M8 4V1h10v3M13 1v12M10.500 13h5M1 8V6h7v2M4.500 6v7M3 13h3" /></svg><Caret $s={3} />
              </EditButton>
              <EditButton type="button" $w={33} $dim aria-label="More"><Dots3 /></EditButton>
              <EditButton type="button" $w={49} $ml={9} aria-label="List"><FaListUl size={16} /><Caret $s={3} /></EditButton>
              <EditButton type="button" $w={27} aria-label="Align"><FaAlignLeft size={14} /><Caret $s={3} /></EditButton>
              <EditButton type="button" $w={50} aria-label="Paragraph"><Pilcrow size={16} /><Caret $s={3} /></EditButton>
              <EditButton type="button" $w={34} $ml={18} aria-label="Link"><Link size={16} strokeWidth={2.2} /></EditButton>
              <EditButton type="button" $w={26} aria-label="Image"><FaRegImage size={16} /></EditButton>
              <EditButton type="button" $w={28} $dim aria-label="More"><Dots3 /></EditButton>
              <Spacer />
              <EditButton type="button" $w={22} $off aria-label="Undo"><RotateCcw size={17} strokeWidth={2.4} /></EditButton>
              <EditButton type="button" $w={36} $dim aria-label="More"><Dots3 /></EditButton>
              <EditButton type="button" $w={66} $line aria-label="Preview">
                <svg width="18" height="16" fill="none" stroke="currentColor" strokeWidth="1.700"><path d="M7 15H1V1h6l4 4v1M7 1v4h4" /><circle cx="12" cy="10.500" r="3" /><path d="M14 12.500l3 3" /></svg>
              </EditButton>
            </EditorBar>
            <TextArea aria-label="Message" />
            <TextCaret />
          </Editor>
          <Attach type="button"><Paperclip size={15} />Attach files</Attach>
        </BlockBody>
        <FormRow>
          <RowLabel htmlFor="tags">Tags:</RowLabel>
          <RowField $line $p="15px 0 0 10px"><TagInput id="tags" /><Hint>Multiple tags may be separated by commas.</Hint></RowField>
        </FormRow>
        <FormRow>
          <RowLabel as="span" $top={16}>Options:</RowLabel>
          <RowField $p="12px 0 12px 10px">
            <Check><input type="checkbox" defaultChecked />Watch this thread...</Check>
            <Check $in><input type="checkbox" />and receive email notifications</Check>
          </RowField>
        </FormRow>
        <SubmitRow><Submit><SquarePen size={14} />Post thread</Submit></SubmitRow>
      </Block>
      <VBar /><HBar />
    </Viewport>
  );
}

function BrowserWindow() {
  return (
    <Browser aria-label="Browser">
      <BrowserMenu>
        {FOX_MENU.map((m) => <Mnemonic key={m.join("")} parts={m} />)}
        <Spacer />
        {["M1 5h8", "M1 5h8M5 1v8", "M1 1l8 8M9 1L1 9"].map((d) => (
          <WinButton key={d} aria-label="Window control"><svg width="10" height="10" stroke="currentColor" strokeWidth="2.500"><path d={d} /></svg></WinButton>
        ))}
      </BrowserMenu>
      <Tabs>
        <Tab><Daemon /><button>Base System | The Fre</button><button aria-label="Close tab"><X size={14} strokeWidth={1.5} /></button></Tab>
        <Tab $on><Daemon /><button>Post thread | The Free</button><button aria-label="Close tab"><X size={14} strokeWidth={1.5} /></button></Tab>
        <IconButton aria-label="New tab"><Plus size={16} /></IconButton>
        <Spacer />
        <IconButton $w={24} aria-label="List tabs"><ChevronDown size={16} /></IconButton>
      </Tabs>
      <NavBar>
        <IconButton aria-label="Back"><ArrowLeft size={17} /></IconButton>
        <IconButton $off aria-label="Forward"><ArrowRight size={17} /></IconButton>
        <IconButton aria-label="Reload"><RotateCw size={16} /></IconButton>
        <UrlBar>
          <IconButton $w={27} aria-label="Tracking protection"><Shield size={17} strokeWidth={1.8} /></IconButton>
          <IconButton $w={27} aria-label="Site security"><Lock size={17} strokeWidth={1.8} /></IconButton>
          <Url href="#url">https://forums.<b>freebsd.org</b>/forums/system-hardware.32/post-thr</Url>
          <IconButton $w={30} aria-label="Bookmark"><Star size={17} strokeWidth={1.8} /></IconButton>
        </UrlBar>
        <IconButton aria-label="Pocket"><svg width="16" height="16" fill="none" stroke="currentColor" strokeWidth="1.500"><path d="M2 2.500h12a1 1 0 0 1 1 1V8A7 6 0 0 1 1 8V3.500a1 1 0 0 1 1-1zM5 6l3 3 3-3" /></svg></IconButton>
        <IconButton aria-label="Account"><svg width="16" height="16"><circle cx="8" cy="8" r="7.500" fill="#f0f0f0" /><text x="8" y="11" fontSize="8" fontWeight="700" textAnchor="middle" fill="#444">D</text></svg></IconButton>
        <IconButton aria-label="Extensions"><svg width="16" height="16" fill="none" stroke="currentColor" strokeWidth="1.500"><path d="M2 5.500h4V3a2 2 0 0 1 4 0v2.500h3.500V15H2v-3h2a1.800 1.800 0 0 0 0-3.500H2z" /></svg></IconButton>
        <IconButton aria-label="Menu"><Menu size={16} strokeWidth={1.8} /></IconButton>
      </NavBar>
      <ForumPage />
    </Browser>
  );
}

const D = ({ children }) => <svg width="48" height="48" viewBox="0 0 48 48">{children}</svg>;
const R = (p) => <rect x="4" y="5" width="40" height="40" rx="3" {...p} />;
const DOCK = [
  ["Show desktop", <D><R fill="url(#dkblue)" stroke="#2a7bc0" /><path fill="#fff" d="M5 6h38v5H5zM11 38h26v6H11z" /><path fill="#fff" opacity=".18" d="M5 11h38c-4 12-20 16-38 20z" /></D>],
  ["Settings", <D><R fill="#858585" stroke="#666" /><circle cx="24" cy="27" r="8" fill="none" stroke="#555" strokeWidth="5" /><circle cx="24" cy="27" r="11.500" fill="none" stroke="#555" strokeWidth="3" strokeDasharray="4 5" /></D>],
  ["Editor", <D><R fill="#fafafa" stroke="#999" /><path fill="#4a9cf0" d="M4 8a3 3 0 0 1 3-3h34a3 3 0 0 1 3 3v8H4z" /><path fill="#fff" d="M17 9l4 2h6l3-2-1 5H19z" /><path stroke="#cfe0f2" d="M7 22h34M7 27h34M7 32h34M7 37h20" /><path stroke="#f2b8b8" d="M10 17v27" /><path fill="#f2c033" stroke="#9a7415" d="M24 37l16-18 5 4-16 17-6 2z" /><path fill="#f08a9c" stroke="#a55" d="M40 19l3-2 5 4-3 3z" /></D>],
  ["Calculator", <D><rect x="9" y="2" width="30" height="45" rx="3" fill="#dddcd8" stroke="#aaa" /><rect x="13" y="7" width="22" height="7" fill="#6ea37c" />{[14, 23, 32].map((x) => [21, 30, 39].map((y) => <circle key={x + "-" + y} cx={x + 1} cy={y} r="3" fill={y === 21 ? "#8c8c8c" : "#555560"} />))}<rect x="30" y="27" width="6" height="16" rx="2" fill="#ff7a00" /></D>],
  ["VLC", <D><path fill="#f57c00" d="M8 38h32l4 10H4z" /><path fill="#ff8a10" d="M21 2q3-4 6 0l10 39q-13 6-26 0z" /><path fill="#e4e4e4" d="M18.500 12h11l2.500 9q-8 3-16 0zM14 28q10 4 20 0l3 8q-13 6-26 0z" /></D>],
  ["WeChat", <D><ellipse cx="18" cy="18" rx="18" ry="16" fill="#21d366" /><path fill="#21d366" d="M6 28l-1 9 9-5z" /><circle cx="12" cy="13" r="2.500" fill="#0b7a37" /><circle cx="24" cy="13" r="2.500" fill="#0b7a37" /><ellipse cx="34" cy="30" rx="15" ry="13" fill="#e6e6e6" /><path fill="#e6e6e6" d="M38 40l6 6-1-8z" /><circle cx="29" cy="26" r="2" fill="#888" /><circle cx="39" cy="26" r="2" fill="#888" /></D>],
  ["Screenshot", <D><rect x="3" y="7" width="42" height="32" fill="url(#dkblue)" stroke="#111" strokeWidth="2" /><rect x="10" y="12" width="28" height="22" fill="none" stroke="#fff" strokeDasharray="4 2" /><path fill="none" stroke="#fff" strokeWidth="1.500" d="M20 16l7 11M28 16l-7 11" /><circle cx="20" cy="29" r="2" fill="none" stroke="#fff" /><circle cx="28" cy="29" r="2" fill="none" stroke="#fff" /><path fill="#bbb" d="M19 40h10l5 8H14z" /></D>],
  ["Terminal", <D><rect x="4" y="5" width="40" height="42" rx="3" fill="#1b2431" stroke="#8a929b" strokeWidth="2.500" /><text x="9" y="25" fontSize="15" fontWeight="700" fill="#fff" fontFamily="DejaVu Sans Mono, monospace">$_</text></D>],
  ["Chromium", <D><circle cx="24" cy="24" r="24" fill="#6a9ff0" /><path fill="#1b66cf" d="M3 13A24 24 0 0 1 45 13H24L12 30z" /><path fill="#a9c8f7" d="M45 13a24 24 0 0 1-21 35l11-19a12 12 0 0 0-1-16z" /><circle cx="24" cy="24" r="12" fill="#fff" /><circle cx="24" cy="24" r="9.500" fill="#1e72e8" /></D>],
  ["Home", <D><path fill="#f3f3f3" stroke="#999" d="M5 8q0-3 3-3h12l4 4h17q3 0 3 3v30H5z" /><rect x="4" y="12" width="40" height="33" rx="3" fill="#4a9cf0" stroke="#2a74c4" /><path fill="#fff" d="M24 21l10 9h-3v8h-5v-6h-4v6h-5v-8h-3z" /></D>, true],
  ["GIMP", <D><path fill="#5a5549" stroke="#38342c" d="M2 22c6 2 12 0 17-8l4 3c6 0 12-6 16-12 2 12 1 22-5 27-7 5-19 5-26 0-4-3-6-6-6-10z" /><ellipse cx="4" cy="21" rx="4" ry="5" fill="#111" /><circle cx="14" cy="19" r="5" fill="#fff" /><circle cx="23" cy="19" r="4.500" fill="#fff" /><circle cx="13" cy="20" r="2" /><circle cx="22" cy="20" r="2" /><path stroke="#f08a24" strokeWidth="3" d="M24 27l14 7" /><path fill="#222" d="M36 32c6 0 9 5 10 12-6-1-11-5-11-9z" /></D>],
  ["Firefox", <Fox s={48} />, true],
  ["XTerm", <D><path fill="#fff" stroke="#000" d="M5 4l4-4h35v30l-5 5H5z" /><rect x="6" y="4" width="33" height="30" fill="#000" stroke="#fff" /><text x="8" y="19" fontSize="17" fill="#f11" fontFamily="Liberation Mono, monospace">X</text><text x="8" y="31" fontSize="12" fontFamily="Liberation Mono, monospace"><tspan fill="#fff">T</tspan><tspan fill="#f90">E</tspan><tspan fill="#4c4">R</tspan><tspan fill="#4af">M</tspan></text><path fill="#fff" stroke="#000" d="M5 38h35v6l-4 4H1z" /><path stroke="#000" strokeDasharray="1 2" d="M6 41h31M5 44h31" /></D>],
  ["Tiger", <D><rect x="5" y="5" width="38" height="40" rx="6" fill="#ff8a34" stroke="#111" strokeWidth="2" /><path fill="#111" d="M8 12l14 4-10 1zM20 7l12 6-9-1zM6 22l12-4c10-4 20-2 23 4-6 8-18 13-24 9z" /><path fill="#fff" d="M14 26c6-8 16-9 24-5-6 8-15 11-20 8z" /><circle cx="25" cy="24" r="6" fill="#58c060" /><circle cx="25" cy="24" r="2.500" fill="#111" /><path stroke="#111" strokeWidth="2" fill="none" d="M9 36c10 4 22 2 31-5M12 41c9 2 18 0 26-4" /></D>],
  ["qBittorrent", <D><circle cx="24" cy="25" r="20" fill="#4a9df0" stroke="#2f7bc8" /><text x="24" y="33" fontSize="26" fill="#fff" textAnchor="middle" fontFamily="Lato, sans-serif">qb</text></D>],
  ["Writer", <D><path fill="#fbfbfb" stroke="#2a74c4" strokeWidth="2" d="M5 5h28l11 12v27H5z" /><path fill="#4a9cf0" d="M31 5h13v14z" /><path stroke="#3b8ae8" strokeWidth="1.500" d="M13 19h8M13 23h8M13 27h8M13 32h22M13 36h22" /><path fill="none" stroke="#3b8ae8" strokeWidth="1.500" d="M24 19h11v9H24zM25 27l4-4 3 3 3-3" /></D>, true],
  ["Clock", <D><circle cx="24" cy="24" r="22" fill="#e9ecec" stroke="#b4b8b8" strokeWidth="3" /><circle cx="24" cy="24" r="18" fill="none" stroke="#999" strokeWidth="2" strokeDasharray="1 8.400" /><path stroke="#111" strokeWidth="1.500" d="M7 23l17 2 13-2" /></D>],
  ["Scissors", <D><path fill="#e6e6e2" stroke="#777" d="M12 6l14 24-4 2C15 24 10 15 12 6zM36 6L22 30l4 2c7-8 12-17 10-26z" /><circle cx="16" cy="37" r="5" fill="none" stroke="#d8232a" strokeWidth="4" /><circle cx="32" cy="37" r="5" fill="none" stroke="#d8232a" strokeWidth="4" /><circle cx="24" cy="29" r="1.500" fill="#666" /></D>],
];

function TopPanel() {
  return (
    <Panel>
      <Grip />
      <AppMenu><XfceLogo />Applications</AppMenu>
      <Lines />
      <Task $on><Fox /><span>Post thread | The Fre...</span></Task>
      <Task><Folder /><span>Books</span></Task>
      <Task><WriterLogo /><span>Untitled 1 — LibreOf...</span></Task>
      <Spacer /><Bar /><Spacer />
      <Pager>
        <Workspace><Mini><WriterLogo s={16} /></Mini><Mini $on><Fox s={17} /></Mini></Workspace>
        <Workspace /><Workspace /><Workspace />
      </Pager>
      <Tray>
        <svg height="22" viewBox="0 0 26 22"><rect x="5.500" y="3.500" width="14" height="17" rx="1" fill="#eee" stroke="#b9843c" strokeWidth="2" /><path fill="#ccc" d="M9 1h7v4H9z" /><path stroke="#999" d="M9 9h7M9 12h7M9 15h7" /></svg>
        <svg height="22" viewBox="0 0 26 22"><path fill="#191a1a" d="M3 8h4l6-6v18l-6-6H3z" /><path fill="none" stroke="#232525" strokeWidth="1.500" d="M15 7q3 4 0 8M18 4q5 7 0 14M21 2q7 9 0 18" /></svg>
        <svg height="22" viewBox="0 0 26 22"><rect x="3.500" y="4.500" width="19" height="13" rx="1" fill="#ddd" stroke="#999" /><path stroke="#444" strokeWidth="1.500" strokeDasharray="2 1" d="M5 7.500h16M5 10.500h16" /><path stroke="#444" strokeWidth="1.500" d="M8 14.500h10" /></svg>
        <svg height="22" viewBox="0 0 26 22"><circle cx="13" cy="11" r="9.500" fill="#fff" stroke="#3aa0e0" strokeWidth="2" /><path fill="none" stroke="#38b36a" strokeWidth="2" d="M4 8a9.500 9.500 0 0 1 18 0" /><path fill="none" stroke="#2588c8" strokeWidth="2" d="M9 6l4 3-3 3" /><path fill="none" stroke="#2f9e5c" strokeWidth="2" d="M17 9l-4 3 4 3" /></svg>
        <svg height="22" viewBox="0 0 26 22"><path fill="#f2f2ee" d="M13 4c3 0 4 2 4 5 0 4 1 5 3 7H6c2-2 3-3 3-7 0-3 1-5 4-5zM11 17h4l-2 2z" /></svg>
        <Clock>01/27/2025<br />02:46 PM</Clock>
        <span>D.W</span>
      </Tray>
      <Grip $c="#6f9db5" />
    </Panel>
  );
}

export default function App() {
  return (
    <Screen>
      <Global />
      <TopPanel />
      <Desktop><WriterWindow /><BrowserWindow /></Desktop>
      <Shade />
      <Dock aria-label="Dock">
        <svg width="0" height="0"><defs><linearGradient id="dkblue" x1="0" y1="0" x2="0" y2="1"><stop offset="0" stopColor="#6cc4ee" /><stop offset="1" stopColor="#2a7be8" /></linearGradient></defs></svg>
        {DOCK.map(([name, icon, run]) => <DockItem key={name} aria-label={name}>{icon}{run && <RunDot />}</DockItem>)}
      </Dock>
      <Pointer width="9" height="14" fill="none" stroke="#000"><path d="M1 .5h3l.5 1 .5-1h3M4.500 1v12M1 13.500h3l.5-1 .5 1h3" /></Pointer>
    </Screen>
  );
}
